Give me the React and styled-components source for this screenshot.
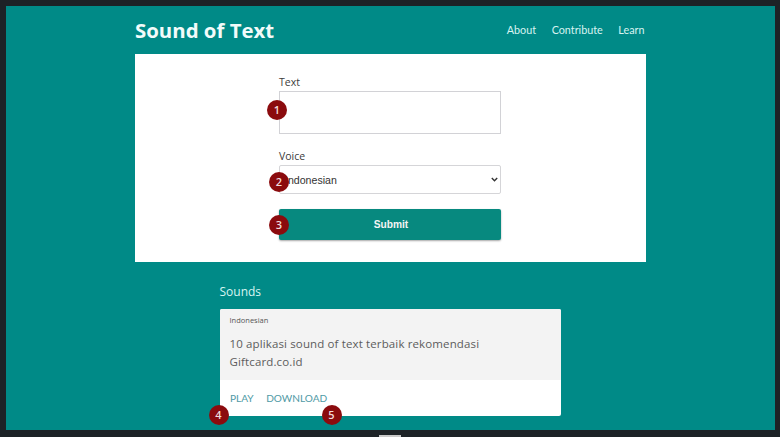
import React from "react";
import styled, { createGlobalStyle } from "styled-components";

const Global = createGlobalStyle`
  html, body { margin: 0; padding: 0; background: #1d2226; }
  body { width: 780px; height: 437px; overflow: hidden; font-family: "Open Sans", sans-serif; }
  * { box-sizing: border-box; }
`;

const Shell = styled.div`
  position: relative;
  width: 780px;
  height: 437px;
  padding: 6px 5px 7px 6px;
`;

const Page = styled.div`
  height: 100%;
  background: #008a87;
  display: flex;
  flex-direction: column;
  align-items: center;
  overflow: hidden;
  padding-right: 1px;
`;

const Header = styled.header`
  width: 510px;
  height: 48px;
  flex: none;
  display: flex;
  align-items: center;
  justify-content: space-between;
`;

const Brand = styled.h1`
  margin: 0 0 1px;
  font: 700 20.4px/30px "Open Sans", sans-serif;
  color: #f2fbfa;
`;

const Nav = styled.nav`
  display: flex;
  gap: 15.5px;
  padding-right: 0.5px;
`;

const NavLink = styled.a`
  font: 400 10.8px/16px Lato, sans-serif;
  color: #d8f3f1;
`;

const Panel = styled.section`
  width: 510px;
  height: 208px;
  flex: none;
  background: #fff;
  box-shadow: 1px 0 0 #fff;
  padding-top: 21px;
  display: flex;
  flex-direction: column;
  align-items: center;
`;

const Form = styled.form`
  width: 222px;
  display: flex;
  flex-direction: column;
`;

const Label = styled.label`
  font: 400 10.5px/14px "Open Sans", sans-serif;
  color: #3c3c3c;
  height: 16px;
`;

const Field = styled.div`
  position: relative;
  height: ${(p) => p.$h}px;
  margin-bottom: ${(p) => p.$mb}px;
`;

const TextBox = styled.textarea`
  display: block;
  width: 100%;
  height: 100%;
  border: 1px solid #d2d2d6;
  background: #fff;
  resize: none;
  padding: 4px 8px;
  outline: none;
`;

const SelectBox = styled.select`
  display: block;
  width: 100%;
  height: 100%;
  appearance: none;
  border: 1px solid #d5d5d8;
  border-radius: 2px;
  background: #fff;
  color: #333;
  font: 400 10.6px "Liberation Sans", sans-serif;
  padding: 0 2px 0 5px;
`;

const Chevron = styled.svg`
  position: absolute;
  right: 3px;
  top: 12px;
  width: 7px;
  height: 5px;
  pointer-events: none;
`;

const SubmitButton = styled.button`
  display: block;
  width: 100%;
  height: 100%;
  border: 0;
  border-radius: 2px;
  background: #07897f;
  color: #f4f4f4;
  font: 700 10.2px "Liberation Sans", sans-serif;
  box-shadow: 0 1px 2px rgba(0, 0, 0, 0.35);
  padding: 0 0 0 2px;
`;

const Badge = styled.span`
  position: absolute;
  left: ${(p) => p.$x}px;
  top: ${(p) => p.$y}px;
  width: 20px;
  height: 20px;
  border-radius: 50%;
  background: #8b0b0e;
  color: #f1dcdc;
  font: 600 11px/20px "Open Sans", sans-serif;
  text-align: center;
  z-index: 2;
`;

const Sounds = styled.section`
  width: 341px;
  flex: none;
  padding-top: 21px;
`;

const SoundsTitle = styled.h2`
  margin: 0 0 8px;
  font: 400 12px/18px "Open Sans", sans-serif;
  color: #d8f5f2;
`;

const Card = styled.article`
  position: relative;
  background: #fff;
  border-radius: 2px;
  height: 107px;
`;

const CardBody = styled.div`
  height: 71px;
  background: #f3f3f3;
  border-radius: 2px 2px 0 0;
  padding: 6px 10px 0;
`;

const Lang = styled.div`
  font: 400 7.5px/11px "Open Sans", sans-serif;
  color: #555;
  margin-bottom: 9px;
`;

const Phrase = styled.p`
  margin: 0;
  font: 400 11.5px/17.5px "Open Sans", sans-serif;
  letter-spacing: 0.13px;
  color: #5c5c5c;
`;

const Actions = styled.div`
  height: 36px;
  display: flex;
  align-items: center;
  gap: 12.5px;
  padding: 0 10px 1px 10.5px;
`;

const Action = styled.a`
  font: 400 10.1px/14px Lato, "Open Sans", sans-serif;
  color: #4f9aa5;
`;

const Tab = styled.span`
  position: absolute;
  left: 379px;
  bottom: 0;
  width: 22px;
  height: 2px;
  background: #c9c9c9;
`;

export default function App() {
  return (
    <>
      <Global />
      <Shell>
        <Page>
          <Header>
            <Brand>Sound of Text</Brand>
            <Nav>
              <NavLink>About</NavLink>
              <NavLink>Contribute</NavLink>
              <NavLink>Learn</NavLink>
            </Nav>
          </Header>
          <Panel>
            <Form>
              <Label>Text</Label>
              <Field $h={43} $mb={15}>
                <TextBox />
                <Badge $x={-12} $y={9}>1</Badge>
              </Field>
              <Label>Voice</Label>
              <Field $h={29} $mb={15}>
                <SelectBox defaultValue="id">
                  <option value="id">Indonesian</option>
                </SelectBox>
                <Chevron viewBox="0 0 7 5" aria-hidden="true">
                  <path d="M0.8 1 L3.5 3.8 L6.2 1" fill="none" stroke="#333" strokeWidth="1.4" />
                </Chevron>
                <Badge $x={-10} $y={7}>2</Badge>
              </Field>
              <Field $h={31} $mb={0}>
                <SubmitButton type="button">Submit</SubmitButton>
                <Badge $x={-10} $y={6}>3</Badge>
              </Field>
            </Form>
          </Panel>
          <Sounds>
            <SoundsTitle>Sounds</SoundsTitle>
            <Card>
              <CardBody>
                <Lang>Indonesian</Lang>
                <Phrase>
                  10 aplikasi sound of text terbaik rekomendasi
                  <br />
                  Giftcard.co.id
                </Phrase>
              </CardBody>
              <Actions>
                <Action>PLAY</Action>
                <Action>DOWNLOAD</Action>
              </Actions>
              <Badge $x={-11} $y={96}>4</Badge>
              <Badge $x={102} $y={96}>5</Badge>
            </Card>
          </Sounds>
        </Page>
        <Tab />
      </Shell>
    </>
  );
}
